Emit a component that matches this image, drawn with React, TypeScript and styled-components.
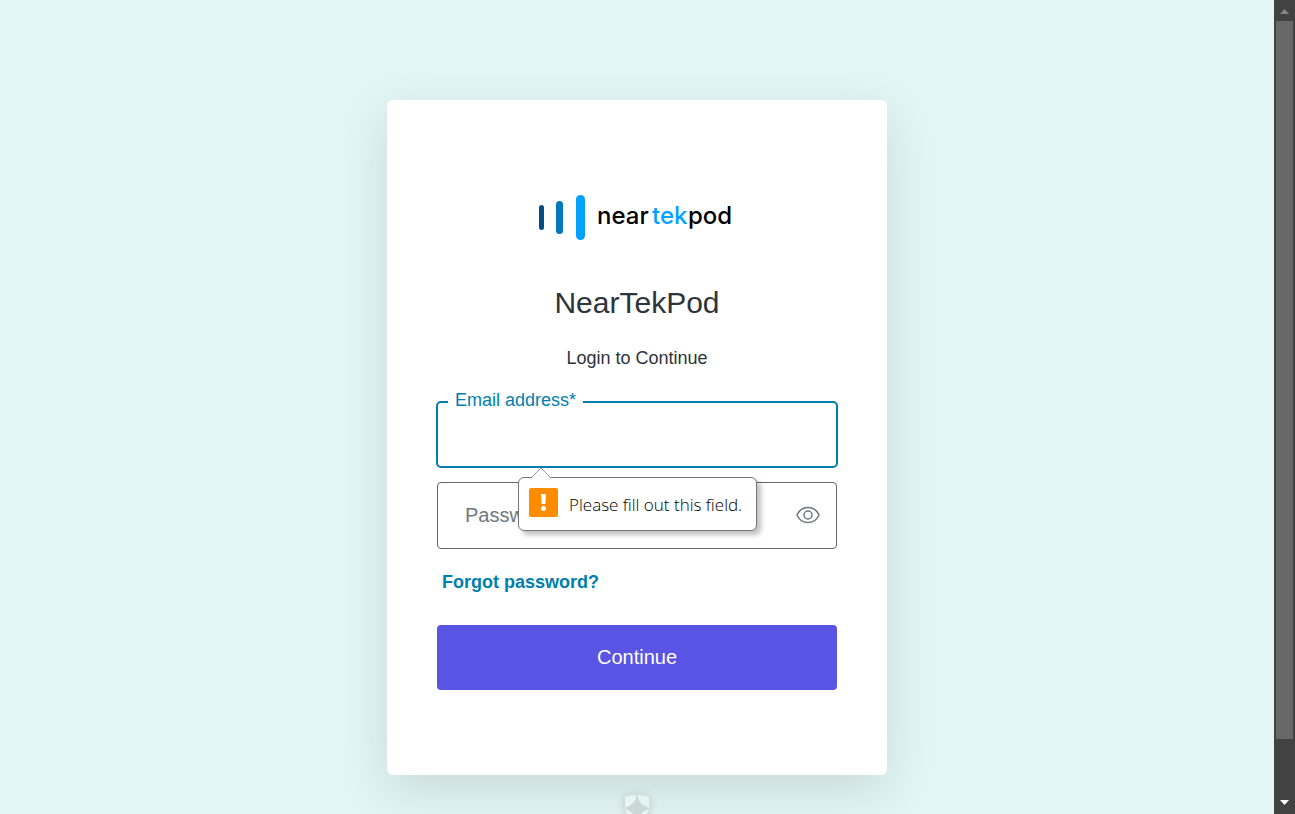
import React from "react";
import styled, { createGlobalStyle, css } from "styled-components";

const GlobalStyle = createGlobalStyle`
  *, *::before, *::after { box-sizing: border-box; }
  body {
    margin: 0;
    overflow: hidden;
    background: #e3f6f5;
    color: #2d333a;
    font-family: "Liberation Sans", Arial, sans-serif;
  }
`;

const Page = styled.div`
  display: flex;
  height: 100vh;
  overflow: hidden;
`;

const Main = styled.main`
  flex: 1;
  min-width: 0;
  display: flex;
  flex-direction: column;
  align-items: center;
  gap: 20px;
  padding-top: 100px;
  overflow: hidden;
`;

const Card = styled.section`
  flex: none;
  width: 100%;
  max-width: 500px;
  padding: 95px 50px 85px;
  background: #fff;
  border-radius: 6px;
  box-shadow: 0 15px 50px rgba(0, 0, 0, 0.12);
`;

const Header = styled.header`
  display: flex;
  flex-direction: column;
  align-items: center;
  text-align: center;
`;

const Title = styled.h1`
  margin: 45px 0 0;
  font-size: 30px;
  line-height: 36px;
  font-weight: 400;
`;

const Subtitle = styled.p`
  margin: 25px 0 0;
  font-size: 18px;
  line-height: 24px;
`;

const Form = styled.form`
  margin-top: 31px;
  display: flex;
  flex-direction: column;
`;

const Field = styled.div<{ $active?: boolean }>`
  position: relative;
  height: 67px;
  margin: ${(p) => (p.$active ? "0 -1px" : "0")};
  & + & { margin-top: 14px; }
`;

const Input = styled.input<{ $active?: boolean }>`
  display: block;
  width: 100%;
  height: 100%;
  padding: 0 28px;
  border: ${(p) => (p.$active ? "2px solid #007faf" : "1px solid #65676b")};
  border-radius: ${(p) => (p.$active ? "5px" : "4px")};
  background: #fff;
  color: #2d333a;
  font: 20px "Liberation Sans", Arial, sans-serif;
  outline: none;
`;

const Label = styled.label<{ $raised?: boolean }>`
  position: absolute;
  line-height: 24px;
  ${(p) =>
    p.$raised
      ? css`
          top: -13px;
          left: 12px;
          padding: 0 7px;
          background: #fff;
          color: #007faf;
          font-size: 18px;
        `
      : css`
          top: 21px;
          left: 28px;
          color: #6f7780;
          font-size: 20px;
        `}
`;

const RevealButton = styled.button`
  position: absolute;
  top: 16px;
  right: 12px;
  width: 34px;
  height: 34px;
  padding: 0;
  display: grid;
  place-items: center;
  border: 0;
  background: none;
`;

const Tooltip = styled.div`
  position: absolute;
  z-index: 2;
  top: 76px;
  left: 82px;
  display: flex;
  align-items: flex-start;
  gap: 11px;
  height: 54px;
  width: 239px;
  padding: 10px;
  border: 1px solid #767676;
  border-radius: 6px;
  background: #fff;
  box-shadow: 4px 4px 5px rgba(0, 0, 0, 0.25);
  color: #000;
  font: 300 17px/34px "Open Sans", "Noto Sans", sans-serif;
  white-space: nowrap;
`;

const Pointer = styled.svg`
  position: absolute;
  top: -11px;
  left: 11px;
`;

const ForgotLink = styled.a`
  align-self: flex-start;
  margin: 21px 5px 0;
  color: #007faf;
  font-size: 18px;
  line-height: 24px;
  font-weight: 700;
  text-decoration: none;
`;

const Submit = styled.button`
  margin-top: 31px;
  height: 65px;
  border: 0;
  border-radius: 4px;
  background: #5a54e5;
  color: #fff;
  font: 20px "Liberation Sans", Arial, sans-serif;
`;

const Badge = styled.svg`
  flex: none;
  overflow: visible;
  filter: drop-shadow(0 1px 5px rgba(0, 0, 0, 0.16));
`;

const Scrollbar = styled.div`
  flex: none;
  width: 21px;
  display: flex;
  flex-direction: column;
  align-items: center;
  background: #424242;
`;

const ScrollArrow = styled.svg`
  flex: none;
  display: block;
`;

const Track = styled.div`
  flex: 1;
  width: 17px;
`;

const Thumb = styled.div`
  height: 93%;
  background: #686868;
`;

const Logo = () => (
  <svg width="200" height="45" viewBox="0 0 200 45" role="img" aria-label="neartekpod">
    <rect x="2" y="10" width="5" height="25" rx="2.5" fill="#004f80" />
    <rect x="19" y="6" width="7" height="33" rx="3.5" fill="#0078bd" />
    <rect x="39" y="0" width="9" height="45" rx="4.5" fill="#00a2ff" />
    <g fontFamily="Inter, sans-serif" fontSize="24" fontWeight="500">
      <text x="60" y="29" fill="#000">near</text>
      <text x="115" y="29" fill="#00a2ff">tek</text>
      <text x="151" y="29" fill="#000">pod</text>
    </g>
  </svg>
);

const EyeIcon = () => (
  <svg width="24" height="18" viewBox="0 0 24 18" fill="none" stroke="#6f7780" strokeWidth="1.5">
    <path d="M1 9C3.2 4.2 7.2 1.4 12 1.4S20.800 4.200 23 9C20.800 13.800 16.800 16.600 12 16.600S3.200 13.800 1 9Z" />
    <circle cx="12" cy="9" r="4" />
  </svg>
);

const WarningIcon = () => (
  <svg width="29" height="29" viewBox="0 0 29 29" aria-hidden="true">
    <rect width="29" height="29" rx="2" fill="#ff8c00" />
    <path d="M12 6h5l-.6 10h-3.800z" fill="#fff" />
    <circle cx="14.500" cy="20.500" r="2.500" fill="#fff" />
  </svg>
);

export default function App() {
  return (
    <Page>
      <GlobalStyle />
      <Main>
        <Card>
          <Header>
            <Logo />
            <Title>NearTekPod</Title>
            <Subtitle>Login to Continue</Subtitle>
          </Header>
          <Form onSubmit={(e) => e.preventDefault()} noValidate>
            <Field $active>
              <Input id="email" type="email" aria-describedby="email-error" $active />
              <Label htmlFor="email" $raised>Email address*</Label>
              <Tooltip id="email-error" role="alert">
                <Pointer width="22" height="12" viewBox="0 0 22 12">
                  <path d="M1 11.500 11 1.500l10 10V12H1z" fill="#fff" />
                  <path d="M1 11 11 1l10 10" fill="none" stroke="#999" />
                </Pointer>
                <WarningIcon />
                <span>Please fill out this field.</span>
              </Tooltip>
            </Field>
            <Field>
              <Input id="password" type="password" />
              <Label htmlFor="password">Password*</Label>
              <RevealButton type="button" aria-label="Show password">
                <EyeIcon />
              </RevealButton>
            </Field>
            <ForgotLink href="#">Forgot password?</ForgotLink>
            <Submit type="submit">Continue</Submit>
          </Form>
        </Card>
        <Badge width="24" height="26" viewBox="0 0 24 26" aria-hidden="true">
          <path d="M12 0 24 13 12 26 0 13Z" fill="#c9d9d8" />
          <path d="M0 12.500V2Q5 0 11.500 0Q10.500 10 0 12.500Z" fill="#e8f5f5" />
          <path d="M24 12.500V2Q19 0 12.500 0Q13.500 10 24 12.500Z" fill="#e8f5f5" />
          <path d="M0 14Q9 16 10.500 26Q1 21 0 14Z" fill="#e8f5f5" />
          <path d="M24 14Q15 16 13.500 26Q23 21 24 14Z" fill="#e8f5f5" />
        </Badge>
      </Main>
      <Scrollbar aria-hidden="true">
        <ScrollArrow width="21" height="21" viewBox="0 0 21 21">
          <path d="M6 14h9l-4.500-5z" fill="#868686" />
        </ScrollArrow>
        <Track>
          <Thumb />
        </Track>
        <ScrollArrow width="21" height="21" viewBox="0 0 21 21">
          <path d="M6 7h9l-4.500 5z" fill="#fff" />
        </ScrollArrow>
      </Scrollbar>
    </Page>
  );
}
